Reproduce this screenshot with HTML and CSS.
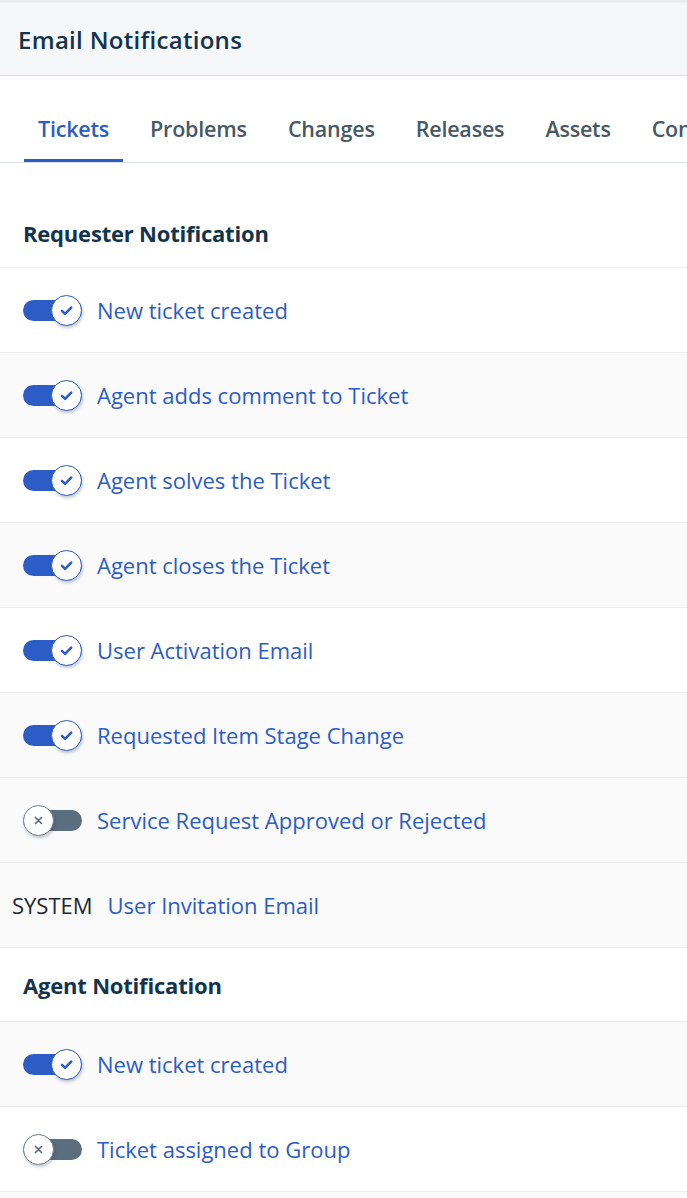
FILE: index.html
```html
<!DOCTYPE html>
<html>
<head>
<meta charset="utf-8">
<link rel="stylesheet" href="styles.css">
</head>
<body>
<div class="topstrip"></div>
<header class="page-header"><h1 class="title">Email Notifications</h1></header>
<nav class="tabs">
  <div class="tab active">Tickets</div>
  <div class="tab">Problems</div>
  <div class="tab">Changes</div>
  <div class="tab">Releases</div>
  <div class="tab">Assets</div>
  <div class="tab">Contracts</div>
</nav>
<main class="content">
  <section class="section first">
    <h2 class="section-title">Requester Notification</h2>
    <div class="row">
      <span class="toggle on"><span class="knob"><svg viewBox="0 0 12 12" class="ico"><path d="M2.8 6.3 L5 8.4 L9.3 3.9" /></svg></span></span>
      <span class="label">New ticket created</span>
    </div>
    <div class="row alt">
      <span class="toggle on"><span class="knob"><svg viewBox="0 0 12 12" class="ico"><path d="M2.8 6.3 L5 8.4 L9.3 3.9" /></svg></span></span>
      <span class="label">Agent adds comment to Ticket</span>
    </div>
    <div class="row">
      <span class="toggle on"><span class="knob"><svg viewBox="0 0 12 12" class="ico"><path d="M2.8 6.3 L5 8.4 L9.3 3.9" /></svg></span></span>
      <span class="label">Agent solves the Ticket</span>
    </div>
    <div class="row alt">
      <span class="toggle on"><span class="knob"><svg viewBox="0 0 12 12" class="ico"><path d="M2.8 6.3 L5 8.4 L9.3 3.9" /></svg></span></span>
      <span class="label">Agent closes the Ticket</span>
    </div>
    <div class="row">
      <span class="toggle on"><span class="knob"><svg viewBox="0 0 12 12" class="ico"><path d="M2.8 6.3 L5 8.4 L9.3 3.9" /></svg></span></span>
      <span class="label">User Activation Email</span>
    </div>
    <div class="row alt">
      <span class="toggle on"><span class="knob"><svg viewBox="0 0 12 12" class="ico"><path d="M2.8 6.3 L5 8.4 L9.3 3.9" /></svg></span></span>
      <span class="label">Requested Item Stage Change</span>
    </div>
    <div class="row alt">
      <span class="toggle off"><span class="knob"><svg viewBox="0 0 12 12" class="ico"><path d="M3.6 3.6 L8.4 8.4 M8.4 3.6 L3.6 8.4" /></svg></span></span>
      <span class="label">Service Request Approved or Rejected</span>
    </div>
    <div class="row alt system">
      <span class="sys">SYSTEM</span>
      <span class="label">User Invitation Email</span>
    </div>
  </section>
  <section class="section">
    <h2 class="section-title">Agent Notification</h2>
    <div class="row alt">
      <span class="toggle on"><span class="knob"><svg viewBox="0 0 12 12" class="ico"><path d="M2.8 6.3 L5 8.4 L9.3 3.9" /></svg></span></span>
      <span class="label">New ticket created</span>
    </div>
    <div class="row">
      <span class="toggle off"><span class="knob"><svg viewBox="0 0 12 12" class="ico"><path d="M3.6 3.6 L8.4 8.4 M8.4 3.6 L3.6 8.4" /></svg></span></span>
      <span class="label">Ticket assigned to Group</span>
    </div>
    <div class="row alt tail"></div>
  </section>
</main>
</body>
</html>
```
FILE: styles.css
```css
* { box-sizing: border-box; }
html, body { margin: 0; padding: 0; }
body {
  width: 687px;
  height: 1198px;
  overflow: hidden;
  background: #ffffff;
  font-family: "Open Sans", "Noto Sans", sans-serif;
  color: #12344d;
}
.topstrip { height: 3px; background: #ebedf1; }
.page-header {
  height: 73px;
  background: #f5f7f9;
  border-bottom: 1px solid #d5dbe1;
  display: flex;
  align-items: center;
  padding-left: 18px;
  padding-top: 1px;
}
.title {
  margin: 0;
  font-size: 24px;
  font-weight: 600;
  color: #12344d;
  letter-spacing: 0.3px;
}
.tabs {
  height: 87px;
  display: flex;
  align-items: stretch;
  padding-left: 24px;
  gap: 13px;
  border-bottom: 1px solid #dadfe3;
  white-space: nowrap;
  overflow: hidden;
}
.tab {
  padding: 22px 14px 0;
  display: flex;
  align-items: center;
  font-size: 21.5px;
  font-weight: 600;
  color: #475867;
  border-bottom: 3px solid transparent;
  letter-spacing: -0.2px;
}
.tab.active { color: #2c5cc5; border-bottom-color: #2c5cc5; }
.section-title {
  margin: 0;
  height: 74px;
  display: flex;
  align-items: center;
  padding-left: 23px;
  padding-top: 1px;
  font-size: 22px;
  font-weight: 700;
  color: #12344d;
  border-bottom: 1px solid #ebebeb;
  letter-spacing: -0.2px;
}
.section.first { padding-top: 31px; }
.section.first .section-title { padding-top: 5px; }
.row {
  height: 85px;
  display: flex;
  align-items: center;
  padding-left: 23px;
  border-bottom: 1px solid #ebebeb;
  background: #ffffff;
}
.row.alt { background: #fafafa; }
.row.tail { height: 7px; border-bottom: none; }
.row.system { padding-left: 12px; }
.label {
  font-size: 22px;
  color: #2c5cc5;
  margin-left: 15px;
}
.sys {
  font-size: 22px;
  color: #1b2733;
}
.toggle {
  position: relative;
  width: 59px;
  height: 21px;
  border-radius: 11px;
  flex: none;
}
.toggle.on { background: #2c5cc5; }
.toggle.off { background: #5b6e7f; }
.knob {
  position: absolute;
  top: -5px;
  width: 31px;
  height: 31px;
  border-radius: 50%;
  background: #ffffff;
  display: flex;
  align-items: center;
  justify-content: center;
  box-shadow: 1px 2px 3px rgba(18, 52, 77, 0.25);
}
.toggle.on .knob { right: 0; border: 1.5px solid #2c5cc5; }
.toggle.off .knob { left: 0; border: 1.5px solid #6f8191; }
.ico { width: 17px; height: 17px; fill: none; stroke-width: 1.8; stroke-linecap: round; stroke-linejoin: round; }
.toggle.on .ico { stroke: #2c5cc5; }
.toggle.off .ico { stroke: #5b6e7f; width: 15px; height: 15px; stroke-width: 1.4; }
```
